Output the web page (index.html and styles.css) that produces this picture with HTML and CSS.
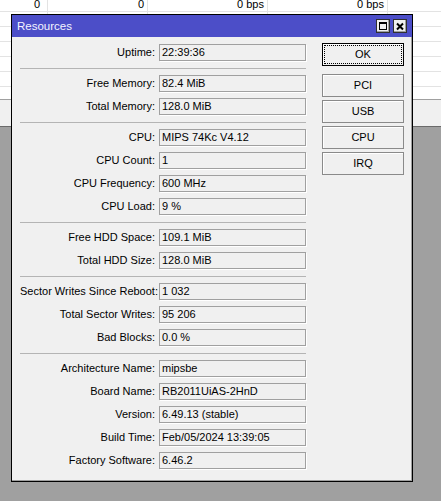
FILE: index.html
```html
<!DOCTYPE html>
<html lang="en">
<head>
    <meta charset="UTF-8">
    <meta name="viewport" content="width=device-width, initial-scale=1.0">
    <title>Resources</title>
    <link rel="stylesheet" href="styles.css">
</head>
<body>
    <!--traffic list behind the window-->
    <div class="grid">
        <div class="row"><span class="c1">0</span><span class="c2">0</span><span class="c3">0 bps</span><span class="c4">0 bps</span></div>
        <div class="row"><span class="c1"></span><span class="c2"></span><span class="c3"></span><span class="c4"></span></div>
        <div class="row"><span class="c1"></span><span class="c2"></span><span class="c3"></span><span class="c4"></span></div>
        <div class="row"><span class="c1"></span><span class="c2"></span><span class="c3"></span><span class="c4"></span></div>
        <div class="row"><span class="c1"></span><span class="c2"></span><span class="c3"></span><span class="c4"></span></div>
        <div class="row"><span class="c1"></span><span class="c2"></span><span class="c3"></span><span class="c4"></span></div>
        <div class="row"><span class="c1"></span><span class="c2"></span><span class="c3"></span><span class="c4"></span></div>
    </div>
    <div class="status"></div>

    <!--Resources window-->
    <div class="win">
        <div class="title">
            <span class="title-text">Resources</span>
            <span class="tb-btn">
                <svg width="12" height="12" viewBox="0 0 12 12">
                    <rect x="2.5" y="2.5" width="7" height="7" fill="none" stroke="#000"/>
                    <rect x="2" y="2" width="8" height="2" fill="#000"/>
                </svg>
            </span>
            <span class="tb-btn">
                <svg width="12" height="12" viewBox="0 0 12 12">
                    <path d="M3 3.5 L9 9.5 M9 3.5 L3 9.5" stroke="#000" stroke-width="2"/>
                </svg>
            </span>
        </div>
        <div class="win-body">
            <div class="form">
                <div class="lbl">Uptime:</div><div class="fld">22:39:36</div>
                <div class="sep"></div>
                <div class="lbl">Free Memory:</div><div class="fld">82.4 MiB</div>
                <div class="lbl">Total Memory:</div><div class="fld">128.0 MiB</div>
                <div class="sep"></div>
                <div class="lbl">CPU:</div><div class="fld">MIPS 74Kc V4.12</div>
                <div class="lbl">CPU Count:</div><div class="fld">1</div>
                <div class="lbl">CPU Frequency:</div><div class="fld">600 MHz</div>
                <div class="lbl">CPU Load:</div><div class="fld">9 %</div>
                <div class="sep"></div>
                <div class="lbl">Free HDD Space:</div><div class="fld">109.1 MiB</div>
                <div class="lbl">Total HDD Size:</div><div class="fld">128.0 MiB</div>
                <div class="sep"></div>
                <div class="lbl">Sector Writes Since Reboot:</div><div class="fld">1 032</div>
                <div class="lbl">Total Sector Writes:</div><div class="fld">95 206</div>
                <div class="lbl">Bad Blocks:</div><div class="fld">0.0 %</div>
                <div class="sep"></div>
                <div class="lbl">Architecture Name:</div><div class="fld">mipsbe</div>
                <div class="lbl">Board Name:</div><div class="fld">RB2011UiAS-2HnD</div>
                <div class="lbl">Version:</div><div class="fld">6.49.13 (stable)</div>
                <div class="lbl">Build Time:</div><div class="fld">Feb/05/2024 13:39:05</div>
                <div class="lbl">Factory Software:</div><div class="fld">6.46.2</div>
            </div>
            <div class="btns">
                <div class="btn ok">OK</div>
                <div class="btn">PCI</div>
                <div class="btn">USB</div>
                <div class="btn">CPU</div>
                <div class="btn">IRQ</div>
            </div>
        </div>
    </div>
</body>
</html>
```

FILE: styles.css
```css
*{
    margin: 0;
    padding: 0;
    box-sizing: border-box;
}
html,body{
    height: 100%;
}
body{
    background-color: #a0a0a0;
    font-family: "Liberation Sans", Arial, sans-serif;
    font-size: 11px;
    color: #000;
    overflow: hidden;
}

/* list behind */
.grid{
    height: 102px;
    margin-top: -3px;
    background-color: #fff;
    overflow: hidden;
}
.grid > .row{
    display: flex;
    height: 15px;
    line-height: 14px;
    border-bottom: 1px solid #e3e3e3;
}
.grid > .row > span{
    text-align: right;
    border-right: 1px solid #e3e3e3;
    padding-right: 3px;
}
.grid .c1{
    width: 48px;
    padding-right: 7px !important;
}
.grid .c2{
    width: 100px;
}
.grid .c3,
.grid .c4{
    width: 120px;
}
.status{
    height: 28px;
    background-color: #f0f0f0;
    border-top: 1px solid #a0a0a0;
    border-bottom: 1px solid #6a6a6a;
}

/* window */
.win{
    position: absolute;
    left: 11px;
    top: 14px;
    width: 402px;
    height: 468px;
    background-color: #f0f0f0;
    border: 1px solid #000;
    box-shadow: inset -1px -1px 0 #a0a0a0;
}
.title{
    display: flex;
    align-items: center;
    gap: 3px;
    height: 22px;
    padding: 0 5px;
    background-color: #4c4ec8;
}
.title-text{
    flex: 1;
    color: #f4f4ff;
    font-size: 11.5px;
}
.tb-btn{
    width: 14px;
    height: 14px;
    display: flex;
    justify-content: center;
    align-items: center;
    background-color: #f0f0f0;
    border: 1px solid #303030;
    box-shadow: inset -1px -1px 0 #a0a0a0;
}
.win-body{
    display: flex;
    gap: 16px;
    padding: 6px 0 0 8px;
}
.form{
    display: grid;
    grid-template-columns: 135px 147px;
    column-gap: 4px;
    row-gap: 6px;
    padding-top: 1px;
    align-content: start;
}
.lbl{
    text-align: right;
    line-height: 17px;
    white-space: nowrap;
}
.fld{
    height: 17px;
    line-height: 15px;
    padding: 0 2px;
    border: 1px solid #a0a0a0;
    box-shadow: 1px 1px 0 #fff;
    white-space: nowrap;
}
.sep{
    grid-column: 1 / 3;
    height: 1px;
    margin-top: 1px;
    background-color: #b4b4b4;
}
.btns{
    display: flex;
    flex-direction: column;
    gap: 3px;
    width: 82px;
}
.btn{
    height: 23px;
    line-height: 21px;
    text-align: center;
    border: 1px solid #8a8a8a;
    box-shadow: inset 1px 1px 0 #fff;
}
.btn.ok{
    border-color: #000;
    outline: 1px dotted #000;
    outline-offset: -3px;
    margin-bottom: 5px;
}
```
